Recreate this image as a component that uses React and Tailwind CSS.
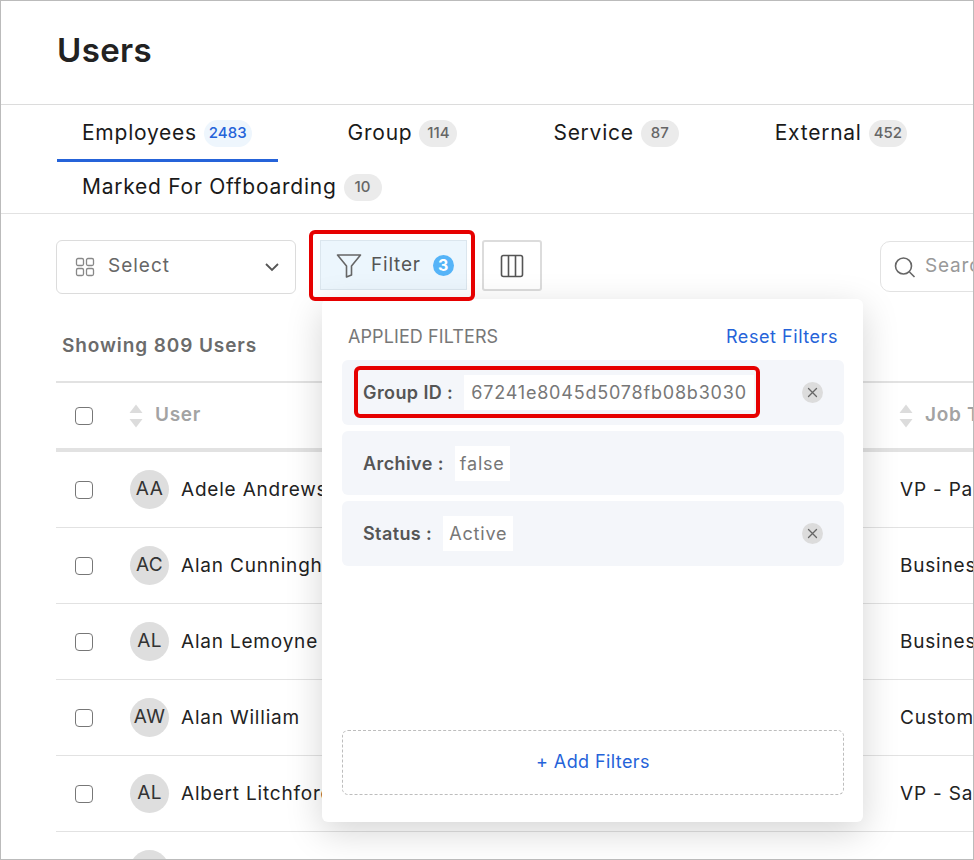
import React from "react";

const FONT = "font-['Inter','Noto_Sans',sans-serif]";

function Tab({ label, count, active, h = "h-[57px]" }) {
  return (
    <div className={`flex items-center pt-[2px] pl-[25px] pr-[26px] border-b-[3px] ${h} ${active ? "border-[#2563d9]" : "border-transparent"}`}>
      <span className="text-[21px] tracking-[0.75px] text-[#1a1a1a] whitespace-nowrap">{label}</span>
      <span className={`ml-[7px] h-[27px] min-w-[38px] px-[5px] rounded-full flex items-center justify-center text-[15px] font-medium ${active ? "bg-[#eef6fd] text-[#2563d9]" : "bg-[#ebebeb] text-[#666]"}`}>{count}</span>
    </div>
  );
}

function Sort() {
  return (
    <svg width="14" height="24" viewBox="0 0 14 24" className="shrink-0">
      <path d="M7 0.5l6.5 8.5H0.5z" fill="#dcdcdc" />
      <path d="M7 23.5l6.5-8.5H0.5z" fill="#dcdcdc" />
    </svg>
  );
}

function Check() {
  return <div className="w-[18px] h-[18px] rounded-[4px] border-[1.5px] border-[#777] bg-white shrink-0" />;
}

function Row({ initials, name, job }) {
  return (
    <div className="flex items-center h-[76px] border-b border-[#e2e2e2]">
      <div className="w-[74px] pl-[19px] shrink-0"><Check /></div>
      <div className="w-[39px] h-[39px] rounded-full bg-[#dedede] flex items-center justify-center text-[19px] tracking-[0.4px] text-[#333] shrink-0">{initials}</div>
      <div className="w-[731px] pl-[12px] pt-[1px] text-[19px] tracking-[0.8px] text-[#222] whitespace-nowrap shrink-0">{name}</div>
      <div className="pt-[1px] text-[19px] tracking-[0.8px] text-[#222] whitespace-nowrap">{job}</div>
    </div>
  );
}

function Clear() {
  return (
    <div className="w-[21px] h-[21px] rounded-full bg-[#dcdcdc] flex items-center justify-center shrink-0">
      <svg width="11" height="11" viewBox="0 0 11 11"><path d="M1.5 1.5l8 8M9.5 1.5l-8 8" stroke="#666" strokeWidth="1.3" strokeLinecap="round" /></svg>
    </div>
  );
}

function Chip({ label, value, clear, h, pad }) {
  return (
    <div className={`flex items-center rounded-[6px] bg-[#f4f6fa] pl-[21px] pr-[21px] ${h}`}>
      <span className="text-[18px] tracking-[0.4px] font-semibold text-[#555] whitespace-nowrap">{label}</span>
      <span className={`ml-[11px] h-[35px] ${pad} bg-white flex items-center text-[18px] tracking-[0.8px] text-[#777] whitespace-nowrap`}>{value}</span>
      <div className="flex-1" />
      {clear && <Clear />}
    </div>
  );
}

export default function App() {
  return (
    <div className={`relative w-[974px] h-[860px] overflow-hidden bg-white border border-[#bbb] ${FONT}`}>
      <div className="h-[104px] pl-[56px] flex items-center border-b border-[#dcdcdc]">
        <h1 className="text-[33px] tracking-[0.4px] font-semibold text-[#222] pb-[4px]">Users</h1>
      </div>

      <div className="border-b border-[#e2e2e2] pl-[56px] h-[109px]">
        <div className="flex flex-wrap gap-x-[45px] w-[917px]">
          <Tab label="Employees" count="2483" active />
          <Tab label="Group" count="114" />
          <Tab label="Service" count="87" />
          <Tab label="External" count="452" />
          <Tab label="Marked For Offboarding" count="10" h="h-[51px]" />
        </div>
      </div>

      <div className="flex items-start pl-[55px] pt-[26px]">
        <div className="w-[240px] h-[54px] rounded-[6px] border border-[#dcdcdc] flex items-center pl-[18px] pr-[15px] shrink-0">
          <svg width="20" height="20" viewBox="0 0 20 20" fill="none" stroke="#888" strokeWidth="1.3">
            <rect x="1.5" y="1.5" width="7" height="7" rx="1.5" />
            <rect x="11.5" y="1.5" width="7" height="7" rx="1.5" />
            <rect x="1.5" y="11.5" width="7" height="7" rx="1.5" />
            <rect x="11.5" y="11.5" width="7" height="7" rx="1.5" />
          </svg>
          <span className="ml-[13px] pb-[2px] text-[19px] tracking-[1px] text-[#666]">Select</span>
          <svg className="ml-auto" width="16" height="10" viewBox="0 0 16 10" fill="none" stroke="#555" strokeWidth="1.8"><path d="M2 2l6 6 6-6" /></svg>
        </div>
        <div className="ml-[24px] w-[147px] h-[50px] bg-[#ecf6fd] border border-[#dbe6ee] flex items-center pl-[15px] shrink-0">
          <svg width="26" height="25" viewBox="0 0 26 25" fill="none" stroke="#666" strokeWidth="1.6" strokeLinejoin="round">
            <path d="M1.5 2h23L15.5 13v9l-5 2V13z" />
          </svg>
          <span className="ml-[9px] text-[19px] tracking-[0.8px] text-[#555]">Filter</span>
          <span className="ml-[12px] w-[21px] h-[21px] rounded-full bg-[#55b4f8] text-white text-[16px] font-bold flex items-center justify-center">3</span>
        </div>
        <div className="ml-[15px] w-[60px] h-[51px] rounded-[3px] border-[2px] border-[#dcdcdc] flex items-center justify-center shrink-0">
          <svg width="24" height="24" viewBox="0 0 24 24" fill="none" stroke="#555" strokeWidth="1.6">
            <rect x="1.5" y="1.5" width="21" height="21" rx="2" />
            <path d="M8.5 1.5v21M15.5 1.5v21" />
          </svg>
        </div>
        <div className="ml-[338px] w-[200px] h-[51px] mt-[1px] rounded-[10px] border border-[#e2e2e2] flex items-center pl-[12px] shrink-0">
          <svg width="24" height="24" viewBox="0 0 24 24" fill="none" stroke="#666" strokeWidth="1.6"><circle cx="10.5" cy="11" r="8" /><path d="M16.5 17l5 5" /></svg>
          <span className="ml-[8px] text-[19px] tracking-[0.8px] text-[#999]">Search</span>
        </div>
      </div>

      <div className="pl-[61px] mt-[34px] h-[36px] text-[19px] tracking-[0.9px] font-semibold text-[#6b6b6b] flex items-center">Showing 809 Users</div>

      <div className="ml-[55px] mt-[17px] w-[1000px] border-t-2 border-[#e2e2e2]">
        <div className="flex items-center h-[65px] border-b-[4px] border-[#e2e2e2] box-content">
          <div className="w-[73px] pl-[19px] shrink-0"><Check /></div>
          <Sort />
          <span className="ml-[12px] w-[744px] text-[19px] tracking-[0.7px] font-semibold text-[#a3a3a3] shrink-0">User</span>
          <Sort />
          <span className="ml-[12px] text-[19px] tracking-[0.7px] font-semibold text-[#a3a3a3] whitespace-nowrap">Job Title</span>
        </div>
        <Row initials="AA" name="Adele Andrews" job="VP - Partnerships" />
        <Row initials="AC" name="Alan Cunningham" job="Business Analyst" />
        <Row initials="AL" name="Alan Lemoyne" job="Business Analyst" />
        <Row initials="AW" name="Alan William" job="Customer Success" />
        <Row initials="AL" name="Albert Litchford" job="VP - Sales" />
        <Row initials="AM" name="Albert Mason" job="Engineer" />
      </div>

      {/* filter popover */}
      <div className="absolute left-[321px] top-[298px] w-[541px] h-[523px] bg-white rounded-[6px] shadow-[0_10px_36px_rgba(0,0,0,0.17)] pl-[20px] pr-[19px] flex flex-col">
        <div className="flex items-center justify-between h-[61px] pl-[6px] pr-[6px] pt-[23px] pb-[9px]">
          <span className="text-[18px] tracking-[0.1px] text-[#777]">APPLIED FILTERS</span>
          <span className="text-[18px] tracking-[0.55px] text-[#2563d9]">Reset Filters</span>
        </div>
        <div className="flex flex-col gap-[6px]">
          <Chip label="Group ID :" value="67241e8045d5078fb08b3030" clear h="h-[65px]" pad="px-[7px]" />
          <Chip label="Archive :" value="false" h="h-[64px]" pad="px-[5px]" />
          <Chip label="Status :" value="Active" clear h="h-[65px]" pad="px-[6px]" />
        </div>
        <div className="mt-auto mb-[27px] h-[65px] pb-[2px] rounded-[6px] border border-dashed border-[#bdbdbd] flex items-center justify-center text-[18px] tracking-[0.4px] text-[#2563d9]">+ Add Filters</div>
      </div>

      {/* annotation outlines */}
      <div className="absolute left-[308px] top-[229px] w-[166px] h-[71px] rounded-[6px] border-[4px] border-[#e60000]" />
      <div className="absolute left-[353px] top-[365px] w-[406px] h-[52px] rounded-[6px] border-[4px] border-[#e60000]" />
    </div>
  );
}
